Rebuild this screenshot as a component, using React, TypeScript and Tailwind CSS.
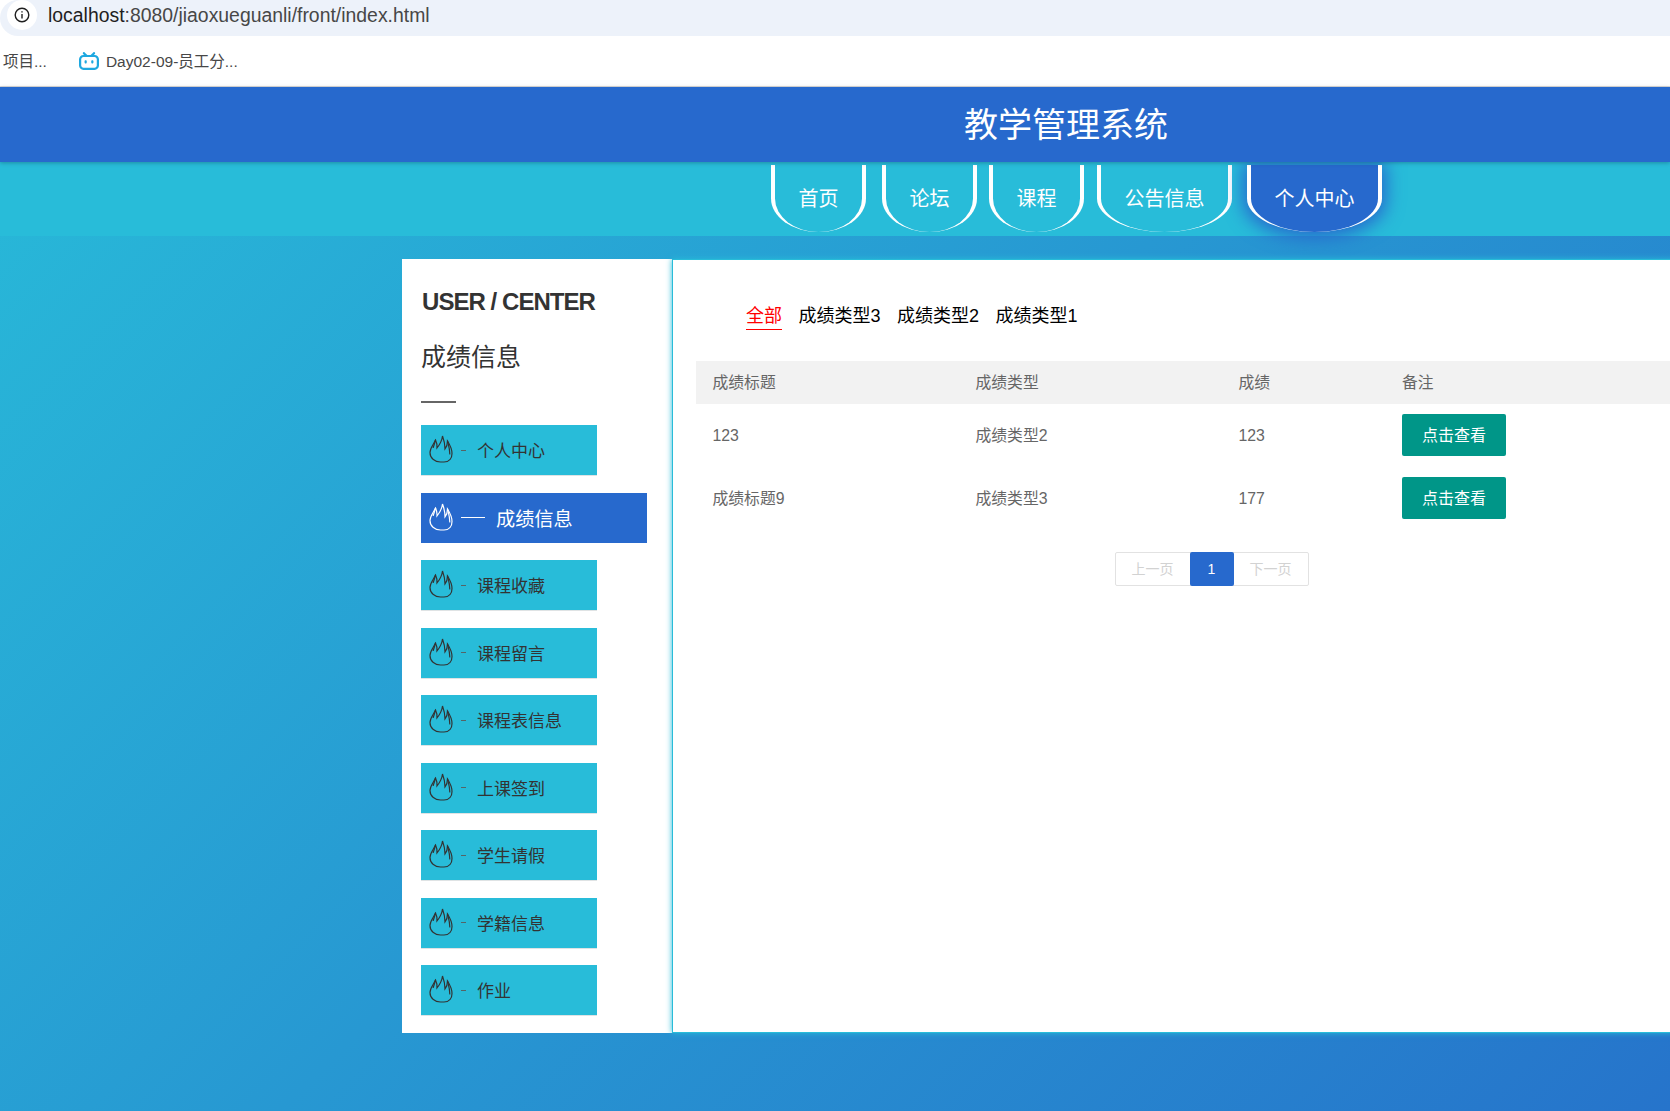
import React from 'react';
import { SiBilibili } from 'react-icons/si';

const navLinks = [
  { label: '首页', width: 'w-[95px] mr-[16px]' },
  { label: '论坛', width: 'w-[95px] mr-[12px]' },
  { label: '课程', width: 'w-[95px] mr-[13px]' },
  { label: '公告信息', width: 'w-[135px] mr-[15px]' },
  { label: '个人中心', width: 'w-[135px]', active: true },
];

const menu = ['个人中心', '成绩信息', '课程收藏', '课程留言', '课程表信息', '上课签到', '学生请假', '学籍信息', '作业'];

const filters = ['全部', '成绩类型3', '成绩类型2', '成绩类型1'];

const rows = [
  { title: '123', type: '成绩类型2', score: '123' },
  { title: '成绩标题9', type: '成绩类型3', score: '177' },
];

function Flame({ className }: { className: string }) {
  return (
    <svg viewBox="0 0 24 28" fill="none" stroke="currentColor" strokeWidth="1.2" strokeLinecap="round" className={className}>
      <path d="M11.500 27C5.500 27 1 23 1 17.500C1 13 4 10.500 6.500 5C7.800 7.500 8.200 10 8 13C10.800 9.500 13 5.500 13.500 1C15 5 16 9 16 14C17.500 12 18.500 9 18.500 6C21 10 23 13.500 23 18.500C23 23 20.500 27 15 27C13.500 27 12.500 27 11.500 27Z" />
      <path d="M18.500 6C19.500 10 20.800 14 20.800 19" />
      <path d="M6.500 5C6 8 5 10 4.200 12.500" />
    </svg>
  );
}

export default function App() {
  return (
    <div className="w-full h-[1111px] overflow-hidden bg-linear-[135deg] from-[#28bcd9] to-[#2674cb] font-['Liberation_Sans','Noto_Sans_CJK_SC',sans-serif]">
      {/* Browser chrome */}
      <div className="bg-white">
        <div className="h-[36px] bg-[#edf2fa] rounded-l-[18px] flex items-center pl-[7px]">
          <div className="w-[30px] h-[30px] -mt-[6px] rounded-full bg-white flex items-center justify-center">
            <svg viewBox="0 0 16 16" className="w-[16px] h-[16px]" fill="none" stroke="#1f1f1f" strokeWidth="1.4">
              <circle cx="8" cy="8" r="6.800" />
              <path d="M8 7v4.500M8 4.200v1.400" />
            </svg>
          </div>
          <div className="ml-[11px] -mt-[4px] text-[19.400px] text-[#474747] whitespace-nowrap">
            <span className="text-[#1f1f1f]">localhost</span>:8080/jiaoxueguanli/front/index.html
          </div>
        </div>
      </div>
      <div className="h-[51px] bg-white border-b border-[#dadada] flex items-center text-[15.500px] text-[#474747] pl-[3px]">
        <span className="pt-[2px]">项目...</span>
        <SiBilibili className="ml-[32px] w-[20px] h-[20px] text-[#1ea8e0]" />
        <span className="ml-[7px] pt-[2px]">Day02-09-员工分...</span>
      </div>

      {/* Title bar */}
      <div className="relative z-10 h-[75px] bg-[#2769cd] shadow-[0_1px_4px_rgba(0,0,0,0.25)] flex items-center pl-[964px] pt-[2px] text-[34px] text-white">
        教学管理系统
      </div>

      {/* Nav */}
      <nav className="h-[74px] bg-[#28bcd9] flex pl-[771px] pt-[3px]">
        {navLinks.map(link => (
          <a
            key={link.label}
            className={`${link.width} h-[67px] border-x-4 border-white rounded-b-[50%] flex items-center justify-center text-[20px] text-white ${
              link.active ? 'bg-[#2769cd] shadow-[0_2px_18px_4px_#2769cd]' : ''
            }`}
          >
            {link.label}
          </a>
        ))}
      </nav>

      {/* Content */}
      <div className="flex pl-[402px] pt-[23px]">
        <aside className="w-[270px] h-[774px] shrink-0 bg-white pl-[20px] pt-[28px]">
          <div className="h-[30px] leading-[30px] text-[24px] tracking-[-0.95px] font-bold text-[#333]">USER / CENTER</div>
          <div className="-ml-px mt-[23px] h-[34px] leading-[34px] text-[25px] text-[#333]">成绩信息</div>
          <div className="-ml-px mt-[27px] w-[35px] h-[2px] bg-[#666]" />
          <ul className="-ml-px mt-[22px] flex flex-col gap-[16.500px]">
            {menu.map(item =>
              item === '成绩信息' ? (
                <li key={item} className="w-[226px] h-[51px] bg-[#2769cd] bg-clip-padding border-b border-white flex items-center pl-[8px] text-white">
                  <Flame className="-mt-[2px] w-[24px] h-[28px] shrink-0" />
                  <span className="ml-[8px] w-[24px] h-px bg-white" />
                  <span className="ml-[11px] pt-[5px] text-[19.200px]">{item}</span>
                </li>
              ) : (
                <li key={item} className="w-[176px] h-[51px] bg-[#28bcd9] bg-clip-padding border-b border-[#dfe3e4] flex items-center pl-[8px] text-[#333]">
                  <Flame className="-mt-[2px] w-[24px] h-[28px] shrink-0" />
                  <span className="ml-[8px] w-[5px] h-px bg-[#556466]" />
                  <span className="ml-[11px] pt-[4px] text-[17px]">{item}</span>
                </li>
              ),
            )}
          </ul>
        </aside>

        <main className="relative z-10 w-[1078px] h-[774px] shrink-0 bg-white border border-[#28bcd9] shadow-[0_0_6px_#28bcd9] pl-[23px] pt-[40px]">
          <div className="flex gap-[16.500px] pl-[50px] h-[35px] text-[18px] text-black">
            {filters.map((f, i) => (
              <span key={f} className={`h-[30px] leading-[32px] ${i === 0 ? 'text-[#ff0000] border-b border-[#ff0000]' : ''}`}>
                {f}
              </span>
            ))}
          </div>
          <table className="mt-[26px] w-[1032px] table-fixed text-[15.800px] text-[#666]">
            <colgroup>
              <col className="w-[263px]" />
              <col className="w-[263px]" />
              <col className="w-[163px]" />
              <col />
            </colgroup>
            <thead>
              <tr className="h-[43px] bg-[#f2f2f2] text-left">
                <th className="pl-[16.500px] font-normal">成绩标题</th>
                <th className="pl-[16.500px] font-normal">成绩类型</th>
                <th className="pl-[16.500px] font-normal">成绩</th>
                <th className="pl-[17px] font-normal">备注</th>
              </tr>
            </thead>
            <tbody>
              {rows.map(r => (
                <tr key={r.title} className="h-[63px]">
                  <td className="pl-[16.500px]">{r.title}</td>
                  <td className="pl-[16.500px]">{r.type}</td>
                  <td className="pl-[16.500px]">{r.score}</td>
                  <td className="pl-[17px]">
                    <button className="-mt-[2px] pt-[2px] w-[104px] h-[42px] rounded-[2px] bg-[#009688] text-white text-[16px] flex items-center justify-center">
                      点击查看
                    </button>
                  </td>
                </tr>
              ))}
            </tbody>
          </table>
          <div className="mt-[22px] flex justify-center pr-[22px]">
            <div className="flex h-[34px] border border-[#e2e2e2] rounded-[2px] text-[14px] text-[#d2d2d2]">
              <span className="w-[74px] flex items-center justify-center">上一页</span>
              <span className="w-[44px] h-[34px] -my-px bg-[#2769cd] rounded-[2px] text-white flex items-center justify-center">1</span>
              <span className="w-[74px] flex items-center justify-center">下一页</span>
            </div>
          </div>
        </main>
      </div>
    </div>
  );
}
